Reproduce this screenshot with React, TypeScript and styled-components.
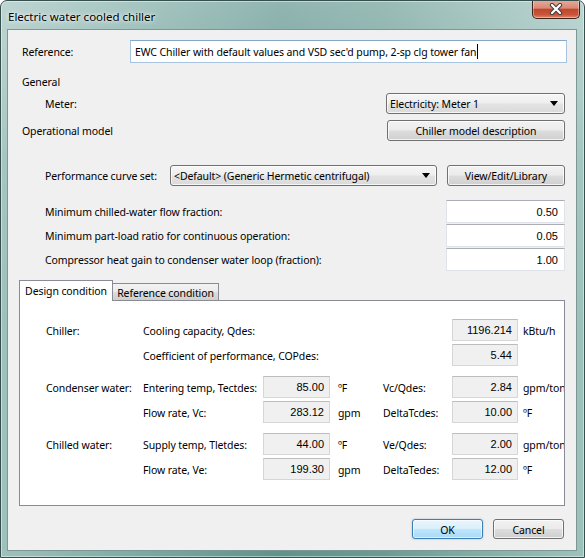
import React from "react";
import styled, { createGlobalStyle } from "styled-components";

const GlobalStyle = createGlobalStyle`
  html, body {
    margin: 0;
    padding: 0;
    width: 585px;
    height: 558px;
    overflow: hidden;
    background: #ffffff;
  }
  body {
    font-family: "Noto Sans", "Liberation Sans", sans-serif;
    font-size: 10.5px;
    letter-spacing: -0.1px;
    color: #000;
  }
  * { box-sizing: border-box; }
`;

const Frame = styled.div`
  width: 585px;
  height: 558px;
  display: flex;
  flex-direction: column;
  border: 1px solid #35504d;
  border-radius: 7px 7px 0 0;
  background:
    linear-gradient(180deg, rgba(255, 255, 255, 0.32) 0%, rgba(255, 255, 255, 0.08) 30%, rgba(255, 255, 255, 0) 60%),
    linear-gradient(90deg, #9fc1bd 0%, #7eaca6 22%, #5e938c 48%, #6a9c95 66%, #9dc2bd 100%);
  box-shadow: inset 0 0 0 1px rgba(255, 255, 255, 0.45);
  overflow: hidden;
`;

const TitleBar = styled.div`
  height: 28px;
  display: flex;
  align-items: flex-start;
  padding-left: 7px;
`;

const Title = styled.div`
  line-height: 28px;
  padding-top: 2px;
  font-size: 11.5px;
  letter-spacing: 0;
  text-shadow: 0 0 6px rgba(255, 255, 255, 0.95), 0 0 3px rgba(255, 255, 255, 0.9);
`;

const CloseButton = styled.div`
  margin-left: auto;
  margin-right: 4px;
  margin-top: -1px;
  width: 48px;
  height: 19px;
  display: flex;
  align-items: center;
  justify-content: center;
  border: 1px solid #3d2420;
  border-top: none;
  border-radius: 0 0 5px 5px;
  background: linear-gradient(180deg, #e9ab9c 0%, #d88a76 45%, #c1462b 52%, #c9553a 82%, #e08c6f 100%);
  box-shadow: inset 0 0 0 1px rgba(255, 255, 255, 0.35);
`;

const Client = styled.div`
  flex: 1;
  margin: 0 7px 6px 6px;
  border: 1px solid #7f9794;
  background: #f0f0f0;
  display: flex;
  flex-direction: column;
  padding: 0 11px 0 14px;
`;

const Row = styled.div<{ $top: number; $h: number; $indent?: boolean }>`
  display: flex;
  align-items: center;
  margin-top: ${(p) => p.$top}px;
  height: ${(p) => p.$h}px;
  padding-left: ${(p) => (p.$indent ? 23 : 0)}px;
`;

const Label = styled.div<{ $w?: number }>`
  width: ${(p) => (p.$w ? `${p.$w}px` : "auto")};
  flex: ${(p) => (p.$w ? "none" : "1")};
  white-space: nowrap;
  padding-top: 1px;
`;

const RefInput = styled.div`
  flex: 1;
  height: 23px;
  margin-right: -2px;
  display: flex;
  align-items: center;
  padding-left: 4px;
  background: #fff;
  border: 1px solid #a7c3df;
  border-top-color: #84a7cc;
  white-space: nowrap;
`;

const Caret = styled.span`
  display: inline-block;
  width: 1px;
  height: 15px;
  background: #000;
  margin-left: 1px;
`;

const winButton = `
  display: flex;
  align-items: center;
  border: 1px solid #707070;
  border-radius: 3px;
  background: linear-gradient(180deg, #f2f2f2 0%, #ebebeb 48%, #dddddd 52%, #cfcfcf 100%);
  box-shadow: inset 0 0 0 1px rgba(255, 255, 255, 0.75);
  white-space: nowrap;
`;

const Combo = styled.div<{ $w: number }>`
  ${winButton}
  width: ${(p) => p.$w}px;
  height: 21px;
  padding: 1px 6px 0 3px;
  background: linear-gradient(180deg, #f6f6f6 0%, #eeeeee 48%, #e3e3e3 52%, #dadada 100%);
`;

const ComboText = styled.span`
  flex: 1;
`;

const Arrow = styled.span`
  width: 0;
  height: 0;
  border-left: 4px solid transparent;
  border-right: 4px solid transparent;
  border-top: 5px solid #000;
  margin-top: -1px;
`;

const Button = styled.div<{ $w: number; $default?: boolean }>`
  ${winButton}
  justify-content: center;
  width: ${(p) => p.$w}px;
  height: ${(p) => (p.$default !== undefined ? 20 : 21)}px;
  padding-top: 1px;
  ${(p) =>
    p.$default
      ? `
    border-color: #3c7fb1;
    background: linear-gradient(180deg, #eaf6fd 0%, #d9f0fc 48%, #bee6fd 52%, #a7d9f5 100%);
    box-shadow: inset 0 0 0 1px rgba(255, 255, 255, 0.6), 0 0 2px rgba(60, 127, 177, 0.5);
  `
      : ""}
`;

const Spacer = styled.div`
  flex: 1;
`;

const NumInput = styled.div`
  width: 119px;
  height: 23px;
  display: flex;
  align-items: center;
  justify-content: flex-end;
  padding-right: 6px;
  background: #fff;
  border: 1px solid #dfe2e8;
  border-top-color: #abadb3;
  font-family: "Liberation Sans", Arial, sans-serif;
  font-size: 11px;
  letter-spacing: 0;
`;

const TabStrip = styled.div`
  display: flex;
  align-items: flex-end;
  height: 21px;
  margin: 9px 0 -1px -3px;
`;

const Tab = styled.div<{ $active?: boolean }>`
  position: relative;
  display: flex;
  align-items: center;
  justify-content: center;
  border: 1px solid #898c95;
  white-space: nowrap;
  ${(p) =>
    p.$active
      ? `
    z-index: 1;
    width: 94px;
    height: 21px;
    border-bottom: none;
    background: #fff;
    padding-bottom: 1px;
  `
      : `
    width: 107px;
    height: 18px;
    margin-left: -1px;
    background: linear-gradient(180deg, #f3f3f3 0%, #ebebeb 50%, #dddddd 52%, #cfcfcf 100%);
    padding-top: 1px;
  `}
`;

const Panel = styled.div`
  height: 206px;
  margin-left: -3px;
  background: #fff;
  border: 1px solid #898c95;
  padding: 18px 0 0 26px;
  display: flex;
  flex-direction: column;
  gap: 10px;
  overflow: hidden;
`;

const Group = styled.div`
  display: grid;
  grid-template-columns: 97px 120px 67px 53px 69px 66px auto;
  grid-auto-rows: 22px;
  row-gap: 3px;
  align-items: center;
  white-space: nowrap;
`;

const Cell = styled.div<{ $col: string; $pad?: number }>`
  grid-column: ${(p) => p.$col};
  padding-left: ${(p) => p.$pad ?? 0}px;
  padding-top: 1px;
`;

const ReadField = styled.div<{ $col: string }>`
  grid-column: ${(p) => p.$col};
  height: 22px;
  display: flex;
  align-items: center;
  justify-content: flex-end;
  padding-right: 5px;
  background: #f0f0f0;
  border: 1px solid #d6d6d6;
  border-top-color: #bcbcbc;
  font-family: "Liberation Sans", Arial, sans-serif;
  font-size: 11px;
  letter-spacing: 0;
`;

const ButtonRow = styled.div`
  display: flex;
  justify-content: flex-end;
  gap: 10px;
  margin-top: 13px;
  padding-right: 1px;
`;

type FieldRow = {
  group?: string;
  label: string;
  value: string;
  unit: string;
  label2: string;
  value2: string;
  unit2: string;
};

const condenser: FieldRow[] = [
  { group: "Condenser water:", label: "Entering temp, Tectdes:", value: "85.00", unit: "ºF", label2: "Vc/Qdes:", value2: "2.84", unit2: "gpm/ton" },
  { label: "Flow rate, Vc:", value: "283.12", unit: "gpm", label2: "DeltaTcdes:", value2: "10.00", unit2: "ºF" },
];

const chilled: FieldRow[] = [
  { group: "Chilled water:", label: "Supply temp, Tletdes:", value: "44.00", unit: "ºF", label2: "Ve/Qdes:", value2: "2.00", unit2: "gpm/ton" },
  { label: "Flow rate, Ve:", value: "199.30", unit: "gpm", label2: "DeltaTedes:", value2: "12.00", unit2: "ºF" },
];

const numericRows = [
  { label: "Minimum chilled-water flow fraction:", value: "0.50" },
  { label: "Minimum part-load ratio for continuous operation:", value: "0.05" },
  { label: "Compressor heat gain to condenser water loop (fraction):", value: "1.00" },
];

const WaterGroup: React.FC<{ rows: FieldRow[] }> = ({ rows }) => (
  <Group>
    {rows.map((r, i) => (
      <React.Fragment key={i}>
        {r.group && <Cell $col="1">{r.group}</Cell>}
        <Cell $col="2">{r.label}</Cell>
        <ReadField $col="3">{r.value}</ReadField>
        <Cell $col="4" $pad={8}>{r.unit}</Cell>
        <Cell $col="5">{r.label2}</Cell>
        <ReadField $col="6">{r.value2}</ReadField>
        <Cell $col="7" $pad={5}>{r.unit2}</Cell>
      </React.Fragment>
    ))}
  </Group>
);

const App: React.FC = () => {
  return (
    <>
      <GlobalStyle />
      <Frame>
        <TitleBar>
          <Title>Electric water cooled chiller</Title>
          <CloseButton>
            <svg width="14" height="12" viewBox="0 0 14 12">
              <path d="M3 2 L11 10 M11 2 L3 10" stroke="#3a3a3a" strokeWidth="4.2" strokeLinecap="round" />
              <path d="M3 2 L11 10 M11 2 L3 10" stroke="#ffffff" strokeWidth="2.3" strokeLinecap="round" />
            </svg>
          </CloseButton>
        </TitleBar>
        <Client>
          <Row $top={10} $h={23}>
            <Label $w={108}>Reference:</Label>
            <RefInput>
              EWC Chiller with default values and VSD sec'd pump, 2-sp clg tower fan
              <Caret />
            </RefInput>
          </Row>

          <Row $top={9} $h={18}>
            <Label>General</Label>
          </Row>
          <Row $top={3} $h={21} $indent>
            <Label>Meter:</Label>
            <Combo $w={179}>
              <ComboText>Electricity: Meter 1</ComboText>
              <Arrow />
            </Combo>
          </Row>
          <Row $top={6} $h={21}>
            <Label>Operational model</Label>
            <Button $w={178}>Chiller model description</Button>
          </Row>

          <Row $top={24} $h={21} $indent>
            <Label $w={125}>Performance curve set:</Label>
            <Combo $w={267}>
              <ComboText>&lt;Default&gt; (Generic Hermetic centrifugal)</ComboText>
              <Arrow />
            </Combo>
            <Spacer />
            <Button $w={118}>View/Edit/Library</Button>
          </Row>

          {numericRows.map((r, i) => (
            <Row key={r.label} $top={i === 0 ? 14 : 1} $h={23} $indent>
              <Label>{r.label}</Label>
              <NumInput>{r.value}</NumInput>
            </Row>
          ))}

          <TabStrip>
            <Tab $active>Design condition</Tab>
            <Tab>Reference condition</Tab>
          </TabStrip>
          <Panel>
            <Group>
              <Cell $col="1">Chiller:</Cell>
              <Cell $col="2 / 6">Cooling capacity, Qdes:</Cell>
              <ReadField $col="6">1196.214</ReadField>
              <Cell $col="7" $pad={5}>kBtu/h</Cell>
              <Cell $col="2 / 6">Coefficient of performance, COPdes:</Cell>
              <ReadField $col="6">5.44</ReadField>
            </Group>
            <WaterGroup rows={condenser} />
            <WaterGroup rows={chilled} />
          </Panel>

          <ButtonRow>
            <Button $w={71} $default>OK</Button>
            <Button $w={71} $default={false}>Cancel</Button>
          </ButtonRow>
        </Client>
      </Frame>
    </>
  );
};

export default App;
